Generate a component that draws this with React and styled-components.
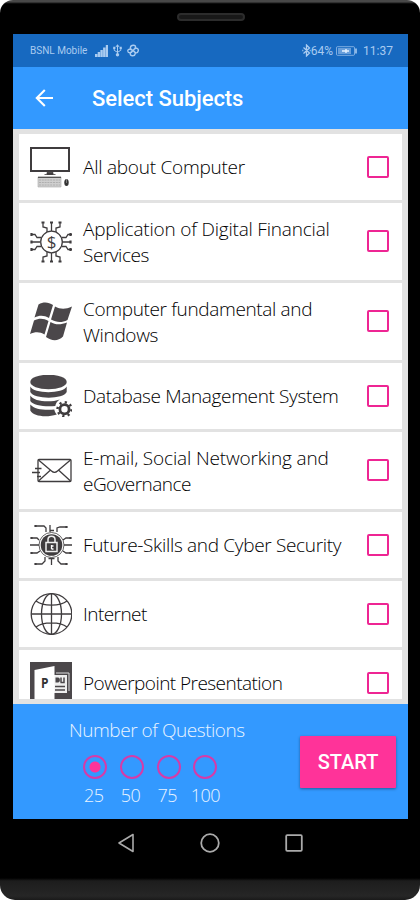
import React, { useState } from 'react'
import styled, { createGlobalStyle } from 'styled-components'

const GlobalStyle = createGlobalStyle`
    *, *::before { box-sizing: border-box; }
    body { margin: 0; background: #fff; }
`

const Phone = styled.div`
    width: 420px;
    height: 900px;
    padding: 0 12px 0 13px;
    display: flex;
    flex-direction: column;
    overflow: hidden;
    border-radius: 13px 13px 15px 15px;
    background: linear-gradient(#484848 0 2px, #1a1a1a 3px, #000 4px, #000 878px, #1d1d1d 881px, #262626 896px, #1a1a1a 900px);
`

const Earpiece = styled.div`
    height: 34px;
    flex: none;
    display: flex;
    justify-content: center;
    padding-top: 13px;

    &::before {
        content: '';
        width: 68px;
        height: 8px;
        border: 2px solid #2c2c2c;
        border-radius: 4px;
        background: #181818;
    }
`

const StatusBar = styled.div`
    height: 33px;
    flex: none;
    padding: 0 15px 0 17px;
    display: flex;
    align-items: center;
    background: #1769c0;
    color: #a9cbf0;
    font-family: Roboto, sans-serif;
    font-size: 12px;

    svg { display: block; flex: none; }
`

const Carrier = styled.span`
    width: 65px;
    font-size: 10px;
    white-space: nowrap;
`

const StatusIcons = styled.div`
    display: flex;
    align-items: center;
    gap: 5px;
`

const StatusRight = styled.div`
    margin-left: auto;
    display: flex;
    align-items: center;
    white-space: nowrap;
`

const Clock = styled.span`
    margin-left: 5px;
`

const AppBar = styled.header`
    height: 62px;
    flex: none;
    padding-left: 22px;
    display: flex;
    align-items: center;
    background: #3399ff;
    color: #fff;
`

const Title = styled.h1`
    margin: 2px 0 0 38px;
    font: 500 22px/28px Roboto, sans-serif;
    letter-spacing: -0.05px;
    white-space: nowrap;
`

const List = styled.main`
    height: 575px;
    flex: none;
    padding: 5px 6px 5px;
    background: #e2e2e2;
`

const Scroll = styled.div`
    height: 565px;
    overflow: hidden;
    display: flex;
    flex-direction: column;
    gap: 3px;
`

const Card = styled.label`
    height: ${props => (props.$tall ? 77 : 66)}px;
    flex: none;
    padding: 0 13px 0 11px;
    display: flex;
    align-items: center;
    background: #fff;

    > svg { display: block; flex: none; }
`

const Subject = styled.div`
    flex: 1;
    margin-left: 11px;
    color: #000;
    font: 300 19px/26px 'Open Sans', 'Noto Sans', sans-serif;
`

const Line = styled.span`
    display: block;
    white-space: nowrap;
    letter-spacing: ${props => props.$spacing || 0}px;
`

const Check = styled.input`
    appearance: none;
    width: 22px;
    height: 22px;
    margin: 0 0 1px;
    flex: none;
    border: 2px solid #ee2593;
    border-radius: 2px;

    &:checked { background: #ee2593; }
`

const Footer = styled.footer`
    height: 115px;
    flex: none;
    padding-right: 12px;
    display: flex;
    justify-content: space-between;
    background: #3399ff;
    color: #e9f4ff;
    font: 300 19px/26px 'Open Sans', 'Noto Sans', sans-serif;
`

const Questions = styled.div`
    padding: 13px 0 0 56px;
`

const Radios = styled.div`
    display: flex;
    margin: 12px 0 0 8px;
`

const Choice = styled.label`
    width: 36.700px;
    display: flex;
    flex-direction: column;
    align-items: center;
    line-height: 24px;
    font-size: 18px;
    letter-spacing: -0.5px;
`

const Amount = styled.span`
    margin-right: 3px;

    ${Choice}:last-child & { margin-right: 0; }
`

const Radio = styled.input`
    appearance: none;
    width: 24px;
    height: 24px;
    margin: 0 0 4px;
    border: 2px solid #d63ba8;
    border-radius: 50%;

    &:checked { background: radial-gradient(circle, #ff3399 5px, transparent 6px); }
`

const Start = styled.button`
    width: 96px;
    height: 52px;
    margin-top: 32px;
    padding: 0;
    border: 0;
    border-radius: 1px;
    background: #ff3399;
    box-shadow: 0 1px 3px rgba(0, 0, 0, 0.4);
    color: #fff;
    font: 500 20px/52px Roboto, sans-serif;
`

const NavBar = styled.nav`
    height: 48px;
    flex: none;
    padding-right: 2px;
    display: flex;
    align-items: center;
    justify-content: center;
    gap: 65px;
`

const Signal = () => (
    <svg width="13" height="12" viewBox="0 0 13 12" fill="currentColor">
        <path d="M0 9h2.400v3H0zM2.700 7h2.400v5H2.700zM5.400 5h2.400v7H5.400zM8.100 2.500h2.400V12H8.100zM10.800 0H13v12h-2.200z" />
    </svg>
)

const Usb = () => (
    <svg width="9" height="13" viewBox="0 0 9 13" fill="none" stroke="currentColor">
        <path d="M4.500 2v8M1.200 4v2.300l3.300 2M7.800 4v2.300l-3.300 2" />
        <path d="M2.500 2.800 4.500.2l2 2.600zM.2 2.800h2.200V5H.2zM6.600 2.800h2.200V5H6.600z" fill="currentColor" stroke="none" />
        <circle cx="4.500" cy="10.800" r="1.700" fill="currentColor" stroke="none" />
    </svg>
)

const Fan = () => (
    <svg width="12" height="13" viewBox="0 0 12 13" fill="none" stroke="currentColor" strokeWidth="1.400">
        <path d="M6 6.500C2 5.500 3 1 6.500 1.200c3 .2 2.500 3.300-.5 5.300C8 3 12 4 11.200 7s-3.200 2-5.200-.5c3.500 1.500 2.500 5.500-.5 5.300s-3-3.300.5-5.300C4 9.500 1 9.500.8 7S4 5 6 6.500" />
    </svg>
)

const Bluetooth = () => (
    <svg width="9" height="13" viewBox="0 0 9 13" fill="none" stroke="currentColor" strokeWidth="1.300">
        <path d="m1.500 3.500 6 5.500-3 3V1l3 3-6 5.500M.3 6.500h1M7.700 6.500h1" />
    </svg>
)

const Battery = () => (
    <svg width="25" height="10" viewBox="-3 0 25 10" fill="none" stroke="currentColor">
        <rect x=".5" y=".7" width="18" height="8.600" rx="1" opacity=".7" />
        <path d="M2 2h13v6H2z" fill="currentColor" stroke="none" opacity=".55" />
        <path d="M6 5h7M10 3v4" stroke="#e6f2ff" strokeWidth="1.400" />
        <path d="M20 2.500v5" strokeWidth="1.600" />
    </svg>
)

const Back = () => (
    <svg width="19" height="18" viewBox="0 0 19 18" fill="none" stroke="currentColor" strokeWidth="2.100">
        <path d="M18 9H2.200M9.800 1 1.800 9l8 8" />
    </svg>
)

const Icon = ({ children }) => (
    <svg width="42" height="42" viewBox="0 0 42 42" fill="none" stroke="#3f3c3e" strokeWidth="1.300">
        {children}
    </svg>
)

const ComputerIcon = () => (
    <Icon>
        <rect x="1" y="2" width="38" height="23" strokeWidth="2" />
        <path d="M.5 25.300h39" strokeWidth="1.500" />
        <path d="M17 26.500h6v2h-6zM14.500 28.500h11" fill="#3f3c3e" strokeWidth=".8" />
        <path d="M8 31h23v10H8z" fill="#cfcfcf" stroke="#aaa" strokeWidth=".6" />
        <path d="M8 31.300h23" stroke="#555" />
        <path d="M9 34h21M9 36.500h21M9 39h21" stroke="#ababab" strokeDasharray="2 .8" strokeWidth=".9" />
        <ellipse cx="36.500" cy="36.500" rx="2.200" ry="3.600" fill="#333" stroke="none" />
        <path d="M36.500 33v4" stroke="#aaa" strokeWidth=".6" />
    </Icon>
)

const FinanceIcon = () => (
    <Icon>
        <circle cx="21.500" cy="21" r="10.800" />
        <text x="21.500" y="27" textAnchor="middle" fontFamily="Open Sans" fontSize="17" fill="#3f3c3e" stroke="none">$</text>
        <path d="M21.500 10V1.500M17 11V7l-4-1V1.500M26 11V7l4-1V1.500M21.500 32v8.500M17 31v4l-4 1v4.500M26 31v4l4 1v4.500" />
        <path d="M10 21H1M11 16.500H7l-2-3H1M11 25.500H7l-2 3H1M32 21h9M32 16.500h4l2-3h4M32 25.500h4l2 3h4" />
        <path d="M20 1.500h3M11.500 1.500h3M28.500 1.500h3M20 40.500h3M11.500 40.500h3M28.500 40.500h3M1.500 19.500v3M1.500 12v3M1.500 27v3M40.500 19.500v3M40.500 12v3M40.500 27v3" strokeWidth="2.200" />
    </Icon>
)

const WindowsIcon = () => (
    <Icon>
        <g fill="#4b474a" stroke="none">
            <path d="M8.500 3.500c5-3 10-2.500 14.500.5l-4 13c-5-3-9.500-3-14.500-.5z" />
            <path d="M25 5.500c5.500 3 10.500 3 17 0l-4.500 13.500c-6 3-11 2.500-16.500-.5z" />
            <path d="M4 19.500c5-2.500 9.500-2.500 14.500.5l-4 13.500c-4.500-3-9.500-3-14.500-.5z" />
            <path d="M20.500 21c5 3 10 3 16.500.5L33 35.500c-5.500 5.500-12 4-17 .5z" />
        </g>
    </Icon>
)

const DatabaseIcon = () => (
    <Icon>
        <g fill="#4b474a" stroke="none">
            <ellipse cx="18.500" cy="7" rx="18.200" ry="7.300" />
            <path d="M.3 11.500c3 7.500 33 7.500 36.400 0v5.500c-3 7.500-33 7.500-36.400 0z" />
            <path d="M.3 20.500c3 6 20 7.500 29.500 4-3 2-4 4-4.500 6.500C15 32 3 30.500.3 26z" />
            <path d="M.3 29.500c4 5 15 6 24 5 .3 2 1 3 2.500 5C16 43 3 41 .3 35.500z" />
        </g>
        <circle cx="34.500" cy="34.200" r="4.600" strokeWidth="2.800" />
        <circle cx="34.500" cy="34.200" r="7" strokeWidth="2.400" strokeDasharray="2.200 3.298" />
    </Icon>
)

const MailIcon = () => (
    <Icon>
        <rect x="8" y="9.500" width="33" height="22" rx="1" />
        <path d="m8.500 10 13 11c2 1.800 4 1.800 6 0L40.500 10M8.500 31l11.500-10.500M40.500 31 29 20.500" />
        <path d="M5 18.500h6.500M2 22.500h8M7 26.500h4" />
    </Icon>
)

const CyberIcon = () => (
    <Icon>
        <circle cx="21.500" cy="21" r="12.500" strokeWidth=".8" />
        <circle cx="21.500" cy="21" r="10.800" fill="#3f3c3e" stroke="none" />
        <path d="M18 18.500v-3c0-4.500 7-4.500 7 0v3" stroke="#eee" strokeWidth="1.500" />
        <rect x="16" y="18.500" width="11" height="9" fill="#3f3c3e" stroke="#eee" strokeWidth="1.500" />
        <path d="M21.500 21v4M21.500 22h2M21.500 25h2" stroke="#fff" />
        <path d="M20 8V1M24 6.500h-4M16 8V4l-2-2H6M27 8V4l3-1h6M21.500 34v7M18.500 34.500h6M15 33v4l-3 3H6M28 33v4l3 3h5" />
        <path d="M9 21H0M9 16 7 14H1M10 27l-3 2H1M34 21h8M33 16l3-2h5M33 27l3 2h5" />
        <path d="M5.500 1v2M36.500 2v2M5.500 39v2M36.500 39v2M1.500 13v2M1.500 28v2M40.500 13v2M40.500 28v2" strokeWidth="2.200" />
    </Icon>
)

const GlobeIcon = () => (
    <Icon>
        <circle cx="21.500" cy="21" r="20.300" />
        <ellipse cx="21.500" cy="21" rx="10" ry="20.300" />
        <path d="M21.500.7v40.600M1.200 21h40.600M6 8c7 5.500 24 5.500 31 0M6 34c7-5.500 24-5.500 31 0" />
    </Icon>
)

const PowerpointIcon = () => (
    <Icon>
        <path d="M0 0h42v42H0z" fill="#4b474a" stroke="none" />
        <path d="M26 11h13v18" stroke="#ddd" strokeWidth="1" />
        <path d="M22 13h15v18H22z" fill="#eee" stroke="none" />
        <path d="m4.500 8 20-4v38h-20z" fill="#fff" stroke="none" />
        <path d="M25 24.500h10M25 28h10" stroke="#4b474a" />
        <path d="M25.500 15.500h2.500c2.500 0 2.500 5 0 5h-2.500z" fill="#4b474a" stroke="none" />
        <path d="M31 15.500v5M30.500 20.500h3.500v-5" stroke="#4b474a" strokeWidth="1.500" />
        <text x="11" y="26" fontFamily="Open Sans" fontWeight="700" fontSize="14" textLength="7.500" lengthAdjust="spacingAndGlyphs" fill="#333" stroke="none">P</text>
    </Icon>
)

const subjects = [
    { icon: ComputerIcon, lines: [['All about Computer', -0.25]] },
    { icon: FinanceIcon, lines: [['Application of Digital Financial', -0.2], ['Services', -0.45]] },
    { icon: WindowsIcon, lines: [['Computer fundamental and', -0.35], ['Windows', -0.35]] },
    { icon: DatabaseIcon, lines: [['Database Management System', -0.36]] },
    { icon: MailIcon, lines: [['E-mail, Social Networking and', -0.15], ['eGovernance', -0.55]] },
    { icon: CyberIcon, lines: [['Future-Skills and Cyber Security', -0.32]] },
    { icon: GlobeIcon, lines: [['Internet', -0.55]] },
    { icon: PowerpointIcon, lines: [['Powerpoint Presentation', -0.55]] },
]

export default function App() {
    const [count, setCount] = useState(25)

    return (
        <Phone>
            <GlobalStyle />
            <Earpiece />
            <StatusBar>
                <Carrier>BSNL Mobile</Carrier>
                <StatusIcons>
                    <Signal />
                    <Usb />
                    <Fan />
                </StatusIcons>
                <StatusRight>
                    <Bluetooth />
                    <span>64%</span>
                    <Battery />
                    <Clock>11:37</Clock>
                </StatusRight>
            </StatusBar>
            <AppBar>
                <Back />
                <Title>Select Subjects</Title>
            </AppBar>
            <List>
                <Scroll>
                    {subjects.map(({ icon: SubjectIcon, lines }) => (
                        <Card key={lines[0][0]} $tall={lines.length > 1}>
                            <SubjectIcon />
                            <Subject>
                                {lines.map(([text, spacing]) => (
                                    <Line key={text} $spacing={spacing}>{text}</Line>
                                ))}
                            </Subject>
                            <Check type="checkbox" />
                        </Card>
                    ))}
                </Scroll>
            </List>
            <Footer>
                <Questions>
                    <Line $spacing={-0.46}>Number of Questions</Line>
                    <Radios>
                        {[25, 50, 75, 100].map(n => (
                            <Choice key={n}>
                                <Radio type="radio" name="count" checked={count === n} onChange={() => setCount(n)} />
                                <Amount>{n}</Amount>
                            </Choice>
                        ))}
                    </Radios>
                </Questions>
                <Start>START</Start>
            </Footer>
            <NavBar>
                <svg width="18" height="20" viewBox="0 0 18 20" fill="none" stroke="#aaa" strokeWidth="1.600" strokeLinejoin="round">
                    <path d="M16 1.500v17L2 10z" />
                </svg>
                <svg width="20" height="20" viewBox="0 0 20 20" fill="none" stroke="#aaa" strokeWidth="1.800">
                    <circle cx="10" cy="10" r="8.800" />
                </svg>
                <svg width="18" height="18" viewBox="0 0 18 18" fill="none" stroke="#aaa" strokeWidth="1.800">
                    <rect x="1.200" y="1.200" width="15.600" height="15.600" rx="1" />
                </svg>
            </NavBar>
        </Phone>
    )
}
